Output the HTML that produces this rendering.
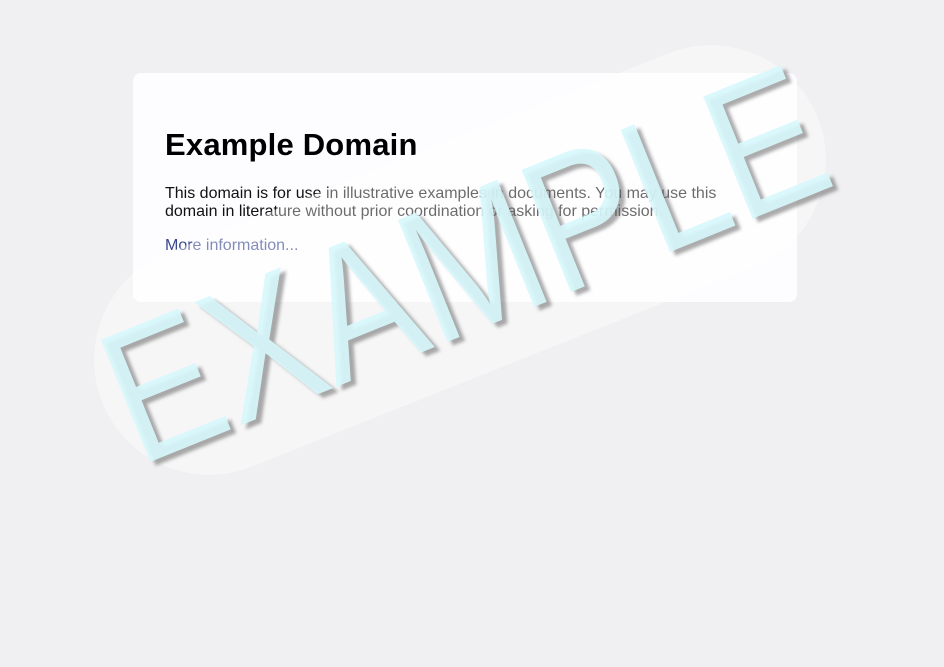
<!DOCTYPE html>
<html><head><meta charset="utf-8"><style>
html,body{margin:0;padding:0;width:944px;height:667px;overflow:hidden;background:#f0f0f2;font-family:"Liberation Sans",sans-serif;}
.card{position:absolute;left:133px;top:73px;width:664px;height:229px;background:#fdfdff;border-radius:8px;}
h1{position:absolute;left:32px;top:54px;margin:0;font-size:31px;font-weight:bold;color:#000;letter-spacing:0.2px;}
p{position:absolute;left:32px;top:112px;margin:0;width:570px;font-size:16px;line-height:18px;color:#111;}
a{position:absolute;left:32px;top:164px;font-size:16px;color:#38488f;text-decoration:none;}
.pill{position:absolute;left:75px;top:145px;width:770px;height:230px;border-radius:115px;background:rgba(255,255,255,0.38);transform:rotate(-21.7deg);transform-origin:center;}
.wm{position:absolute;left:464px;top:264px;transform:translate(-50%,-50%) rotate(-22deg) scale(0.92,1.1);font-size:174px;line-height:1;color:rgba(215,248,252,0.9);text-shadow:4px 5px 3px rgba(90,90,90,0.5);white-space:nowrap;}
</style></head><body>
<div class="card">
<h1>Example Domain</h1>
<p>This domain is for use in illustrative examples in documents. You may use this domain in literature without prior coordination or asking for permission.</p>
<a>More information...</a>
</div>
<div class="pill"></div>
<div class="wm">EXAMPLE</div>
</body></html>
